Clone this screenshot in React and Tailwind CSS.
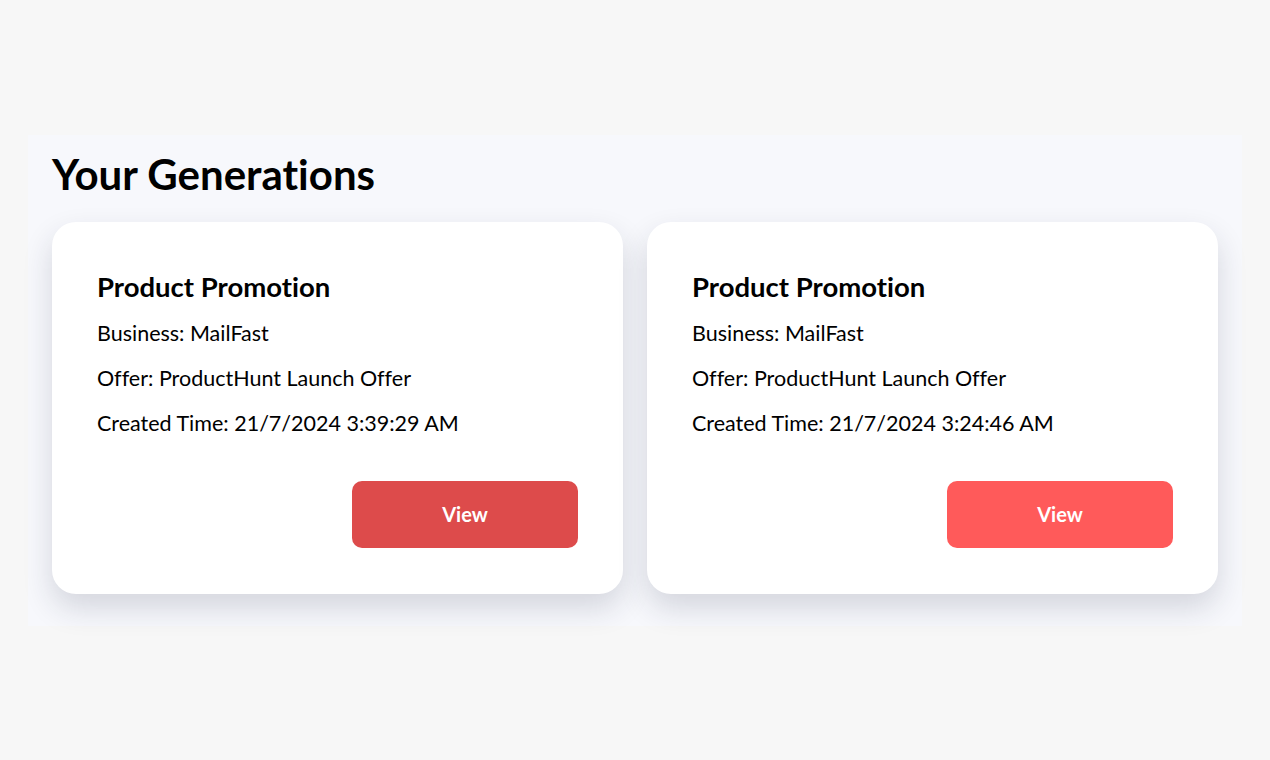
import React from "react";

const generations = [
  {
    id: 1,
    type: "Product Promotion",
    business: "MailFast",
    offer: "ProductHunt Launch Offer",
    created: "21/7/2024 3:39:29 AM",
    hovered: true,
  },
  {
    id: 2,
    type: "Product Promotion",
    business: "MailFast",
    offer: "ProductHunt Launch Offer",
    created: "21/7/2024 3:24:46 AM",
    hovered: false,
  },
];

function GenerationCard({ gen }) {
  return (
    <div className="bg-white rounded-[24px] px-[45px] pt-[49px] pb-[46px] flex flex-col shadow-[0_14px_30px_rgba(30,35,60,0.16)]">
      <h2 className="text-[27.5px] font-bold leading-[32px] text-black">{gen.type}</h2>
      <div className="flex flex-col gap-[17px] mt-[16px] text-[21.5px] leading-[28px] text-black">
        <p>Business: {gen.business}</p>
        <p>Offer: {gen.offer}</p>
        <p>Created Time: {gen.created}</p>
      </div>
      <div className="flex justify-end mt-[44px]">
        <button
          className={`w-[226px] h-[67px] rounded-[10px] text-white text-[20px] font-bold ${
            gen.hovered ? "bg-[#dd4b4b]" : "bg-[#ff5a5a]"
          }`}
        >
          View
        </button>
      </div>
    </div>
  );
}

export default function App() {
  return (
    <div
      className="min-h-screen bg-[#f7f7f7] flex items-center px-[28px] [font-variant-ligatures:none]"
      style={{ fontFamily: "Lato, 'Noto Sans', sans-serif" }}
    >
      <div className="w-full bg-[#f7f8fc] px-6 pt-[11px] pb-8">
        <h1 className="text-[42px] font-bold leading-[56px] text-black mb-[20px]">Your Generations</h1>
        <div className="grid grid-cols-2 gap-6">
          {generations.map((g) => (
            <GenerationCard key={g.id} gen={g} />
          ))}
        </div>
      </div>
    </div>
  );
}
